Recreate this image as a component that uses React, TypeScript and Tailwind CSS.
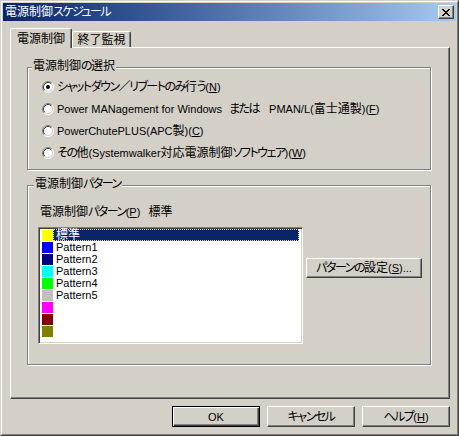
import React from "react";

function T({ s }: { s: string }) {
  const parts = s.match(/[\u3040-\u30ff\uff0f]+|[\u3000-\u303f\u4e00-\u9fff\uff00-\uff0e\uff10-\uffef]+|[^\u3000-\u9fff\uff00-\uffef]+/g) || [];
  return (
    <>
      {parts.map((p, i) => {
        const c = p.charCodeAt(0);
        if ((c >= 0x3040 && c <= 0x30ff) || c === 0xff0f) {
          return (
            <span key={i} className="text-[12px] tracking-[-1.5px]">
              {p}
            </span>
          );
        }
        if (c >= 0x3000) {
          return (
            <span key={i} className="text-[12px]">
              {p}
            </span>
          );
        }
        return (
          <span key={i} className="text-[11px]">
            {p}
          </span>
        );
      })}
    </>
  );
}

function U({ c }: { c: string }) {
  return <u className="underline text-[11px]">{c}</u>;
}

function Radio({ checked }: { checked?: boolean }) {
  return (
    <svg width="12" height="12" viewBox="0 0 12 12" className="shrink-0">
      <circle cx="6" cy="6" r="4.5" fill="#ffffff" />
      <path d="M2.11 9.89 A5.5 5.5 0 0 1 9.89 2.11" fill="none" stroke="#808080" strokeWidth="1" />
      <path d="M9.89 2.11 A5.5 5.5 0 0 1 2.11 9.89" fill="none" stroke="#ffffff" strokeWidth="1" />
      <path d="M2.82 9.18 A4.5 4.5 0 0 1 9.18 2.82" fill="none" stroke="#404040" strokeWidth="1" />
      <path d="M9.18 2.82 A4.5 4.5 0 0 1 2.82 9.18" fill="none" stroke="#d4d0c8" strokeWidth="1" />
      {checked && <circle cx="6" cy="6" r="2" fill="#000000" />}
    </svg>
  );
}

function RadioRow({ checked, children }: { checked?: boolean; children: React.ReactNode }) {
  return (
    <div className="flex items-center h-[22px] gap-[3px]">
      <Radio checked={checked} />
      <span className="leading-[12px] whitespace-nowrap">{children}</span>
    </div>
  );
}

function Btn({ children, isDefault }: { children: React.ReactNode; isDefault?: boolean }) {
  if (isDefault) {
    return (
      <div className="w-[88px] h-[21px] border border-black bg-[#d4d0c8] flex items-center justify-center leading-[12px] whitespace-nowrap shadow-[inset_1px_1px_#ffffff,inset_-1px_-1px_#404040,inset_-2px_-2px_#808080]">
        {children}
      </div>
    );
  }
  return (
    <div className="w-[88px] h-[21px] bg-[#d4d0c8] border-t border-l border-t-white border-l-white border-r border-b border-r-[#404040] border-b-[#404040] shadow-[inset_-1px_-1px_#808080] flex items-center justify-center leading-[12px] whitespace-nowrap">
      {children}
    </div>
  );
}

const items: { color: string; label: string }[] = [
  { color: "bg-[#ffff00]", label: "標準" },
  { color: "bg-[#0000ff]", label: "Pattern1" },
  { color: "bg-[#000080]", label: "Pattern2" },
  { color: "bg-[#00ffff]", label: "Pattern3" },
  { color: "bg-[#00ff00]", label: "Pattern4" },
  { color: "bg-[#c0c0c0]", label: "Pattern5" },
  { color: "bg-[#ff00ff]", label: "" },
  { color: "bg-[#800000]", label: "" },
  { color: "bg-[#808000]", label: "" },
];

export default function App() {
  return (
    <div className="w-[459px] h-[436px] bg-[#d4d0c8] text-black text-[12px] font-['Liberation_Sans','Noto_Sans_CJK_JP',sans-serif] [font-feature-settings:'palt'] border border-t-[#d4d0c8] border-l-[#d4d0c8] border-r-[#404040] border-b-[#404040]">
      <div className="h-full border border-t-white border-l-white border-r-[#808080] border-b-[#808080] p-px flex flex-col">
        {/* Title bar */}
        <div className="h-[18px] shrink-0 flex items-center justify-between bg-linear-to-r from-[#0a246a] to-[#a6caf0] pl-[2px] pr-[2px]">
          <span className="text-white leading-[12px] whitespace-nowrap">
            <T s="電源制御スケジュール" />
          </span>
          <div className="w-[16px] h-[14px] bg-[#d4d0c8] border-t border-l border-t-white border-l-white border-r border-b border-r-[#404040] border-b-[#404040] shadow-[inset_-1px_-1px_#808080] flex items-center justify-center">
            <svg width="8" height="7" viewBox="0 0 8 7" shapeRendering="crispEdges">
              <path d="M0 0h2v1h1v1h2v-1h1v-1h2v1h-1v1h-1v1h-1v1h1v1h1v1h1v1h-2v-1h-1v-1h-2v1h-1v1h-2v-1h1v-1h1v-1h1v-1h-1v-1h-1v-1h-1z" fill="#000000" />
            </svg>
          </div>
        </div>

        {/* Body */}
        <div className="flex-1 flex flex-col pl-[7px] pr-[6px] pt-[7px] pb-[6px]">
          {/* Tabs */}
          <div className="h-[19px] flex items-end shrink-0">
            <div className="relative z-10 w-[62px] h-[20px] -mb-px bg-[#d4d0c8] border-t border-l border-t-white border-l-white border-r border-r-[#404040] shadow-[inset_-1px_0_#808080] rounded-tl-[2px] rounded-tr-[2px] flex items-center justify-center leading-[12px]">
              電源制御
            </div>
            <div className="w-[59px] h-[16px] bg-[#d4d0c8] border-t border-t-white border-l border-l-white border-r border-r-[#404040] shadow-[inset_-1px_0_#808080] rounded-tl-[2px] rounded-tr-[2px] flex items-center justify-center leading-[12px]">
              終了監視
            </div>
          </div>

          {/* Panel */}
          <div className="h-[352px] shrink-0 border-t border-l border-t-white border-l-white border-r border-b border-r-[#404040] border-b-[#404040] shadow-[inset_-1px_-1px_#808080] pl-[16px] pt-[19px] flex flex-col">
            {/* Group 1 */}
            <div className="relative w-[404px] h-[103px] border border-[#808080] shadow-[inset_1px_1px_#ffffff,1px_1px_#ffffff] pl-[14px] pt-[8px]">
              <span className="absolute -top-[8px] left-[4px] px-px bg-[#d4d0c8] leading-[12px] whitespace-nowrap">
                <T s="電源制御の選択" />
              </span>
              <RadioRow checked>
                <T s="シャットダウン／リブートのみ行う(" />
                <U c="N" />
                <T s=")" />
              </RadioRow>
              <RadioRow>
                <T s="Power MANagement for Windows" />
                <span className="ml-[7px]">
                  <T s="または" />
                </span>
                <span className="ml-[10px]">
                  <T s="PMAN/L(富士通製)(" />
                  <U c="F" />
                  <T s=")" />
                </span>
              </RadioRow>
              <RadioRow>
                <T s="PowerChutePLUS(APC製)(" />
                <U c="C" />
                <T s=")" />
              </RadioRow>
              <RadioRow>
                <T s="その他(Systemwalker対応電源制御ソフトウェア)(" />
                <U c="W" />
                <T s=")" />
              </RadioRow>
            </div>

            {/* Group 2 */}
            <div className="relative mt-[15px] w-[404px] h-[180px] border border-[#808080] shadow-[inset_1px_1px_#ffffff,1px_1px_#ffffff] pt-[20px]">
              <span className="absolute -top-[8px] left-[6px] px-px bg-[#d4d0c8] leading-[12px] whitespace-nowrap">
                <T s="電源制御パターン" />
              </span>
              <div className="ml-[12px] h-[12px] leading-[12px] whitespace-nowrap flex">
                <span>
                  <T s="電源制御パターン(" />
                  <U c="P" />
                  <T s=")" />
                </span>
                <span className="ml-[8px]">標準</span>
              </div>
              <div className="mt-[9px] ml-[10px] flex items-start">
                <div className="w-[265px] h-[117px] bg-white border border-t-[#808080] border-l-[#808080] border-r-white border-b-white shadow-[inset_1px_1px_#404040,inset_-1px_-1px_#d4d0c8] pt-px pl-[3px] pr-[3px]">
                  {items.map((it, i) => (
                    <div key={i} className="h-[12px] flex items-start">
                      <div className={`${it.color} w-[11px] h-[11px] mt-px shrink-0`} />
                      {i === 0 ? (
                        <span className="flex-1 h-[12px] bg-[#0a246a] text-white border border-dotted border-[#f5db95] pl-[2px] leading-[10px] whitespace-nowrap">
                          <T s={it.label} />
                        </span>
                      ) : (
                        <span className="flex-1 h-[12px] pl-[3px] leading-[12px] whitespace-nowrap">
                          <T s={it.label} />
                        </span>
                      )}
                    </div>
                  ))}
                </div>
                <div className="ml-[3px] mt-[31px] w-[116px] h-[20px] bg-[#d4d0c8] border-t border-l border-t-white border-l-white border-r border-b border-r-[#404040] border-b-[#404040] shadow-[inset_-1px_-1px_#808080] flex items-center justify-center leading-[12px] whitespace-nowrap">
                  <span>
                    <T s="パターンの設定(" />
                    <U c="S" />
                    <T s=")..." />
                  </span>
                </div>
              </div>
            </div>
          </div>

          {/* Bottom buttons */}
          <div className="mt-[7px] flex justify-end gap-[7px]">
            <Btn isDefault>
              <T s="OK" />
            </Btn>
            <Btn>
              <T s="キャンセル" />
            </Btn>
            <Btn>
              <span>
                <T s="ヘルプ(" />
                <U c="H" />
                <T s=")" />
              </span>
            </Btn>
          </div>
        </div>
      </div>
    </div>
  );
}
